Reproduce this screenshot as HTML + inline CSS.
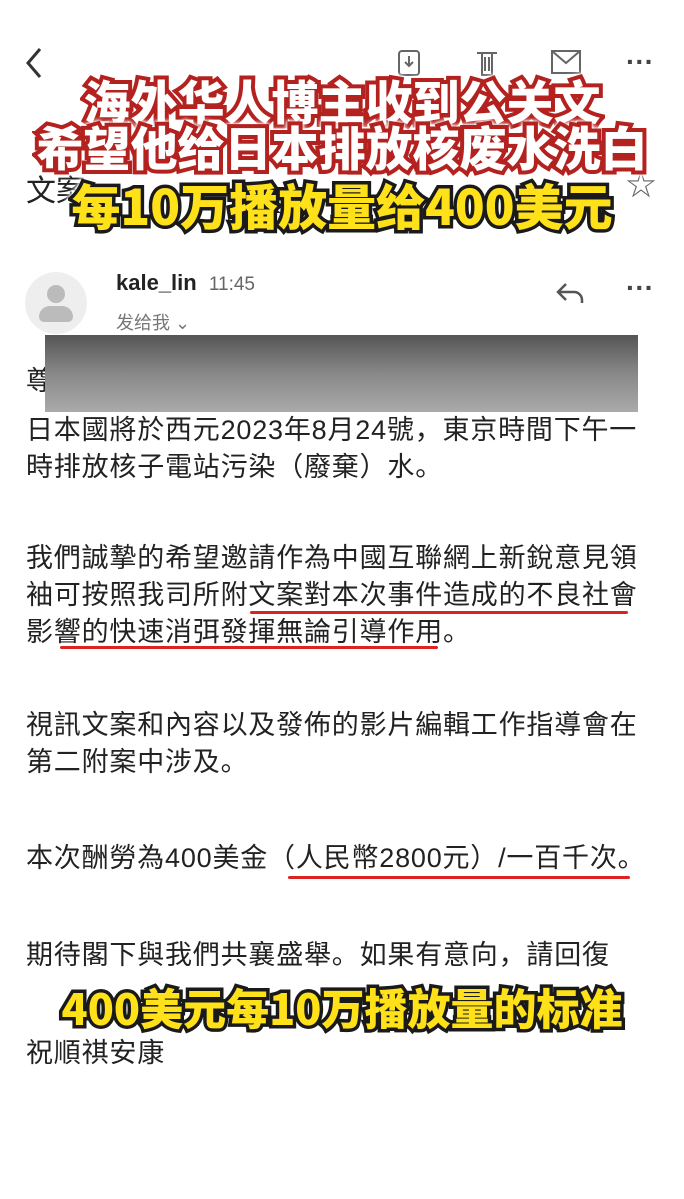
<!DOCTYPE html>
<html><head><meta charset="utf-8"><style>
body{margin:0;width:684px;height:1199px;background:#fff;position:relative;overflow:hidden;font-family:"Liberation Sans","Noto Sans CJK SC",sans-serif;color:#222}
.a{position:absolute;white-space:nowrap}
.t{font-size:27px;left:26px;letter-spacing:0.8px;line-height:1}
.ov{font-family:"Noto Sans CJK SC",sans-serif;font-weight:900;left:0;width:684px;text-align:center;paint-order:stroke fill;line-height:1}
.r{color:#fff;font-size:47px;-webkit-text-stroke:8px #b3221f;filter:drop-shadow(0 0 2px #fff) drop-shadow(0 0 1px #fff)}
.y{color:#ffe11a;font-size:49px;-webkit-text-stroke:7px #1a1a1a;filter:drop-shadow(0 0 2px #fff) drop-shadow(0 0 2px #fff)}
.ul{position:absolute;height:3px;background:#d22;border-radius:2px}
</style></head><body>
<svg class="a" style="left:22px;top:45px" width="24" height="36"><path d="M18 4 L6 18 L18 32" fill="none" stroke="#333" stroke-width="3"/></svg>
<svg class="a" style="left:396px;top:48px" width="26" height="30"><rect x="3" y="3" width="20" height="24" rx="3" fill="none" stroke="#666" stroke-width="2"/><path d="M13 8v10M9 14l4 4 4-4" fill="none" stroke="#666" stroke-width="2"/></svg>
<svg class="a" style="left:474px;top:48px" width="26" height="30"><path d="M3 5h20M8 5v22h10V5M11 9v14M15 9v14" fill="none" stroke="#666" stroke-width="2"/></svg>
<svg class="a" style="left:550px;top:48px" width="32" height="28"><rect x="2" y="3" width="28" height="22" fill="none" stroke="#666" stroke-width="2"/><path d="M2 3l14 12 14-12" fill="none" stroke="#666" stroke-width="2"/></svg>
<div class="a" style="left:626px;top:46px;font-size:28px;color:#444;font-weight:bold">···</div>
<div class="a" style="left:26px;top:166px;font-size:30px">文案</div>
<div class="a" style="left:626px;top:160px;font-size:30px;color:#666">☆</div>
<div class="a ov r" style="top:76px">海外华人博主收到公关文</div>
<div class="a ov r" style="top:122px">希望他给日本排放核废水洗白</div>
<div class="a ov y" style="top:180px">每10万播放量给400美元</div>
<div class="a" style="left:25px;top:272px;width:62px;height:62px;border-radius:50%;background:#eee"></div>
<div class="a" style="left:47px;top:285px;width:18px;height:18px;border-radius:50%;background:#bbb"></div>
<div class="a" style="left:39px;top:306px;width:34px;height:16px;border-radius:17px 17px 8px 8px;background:#bbb"></div>
<div class="a" style="left:116px;top:270px;font-size:22px;font-weight:bold;color:#222">kale_lin <span style="font-weight:normal;color:#666;font-size:19px;margin-left:6px">11:45</span></div>
<div class="a" style="left:116px;top:309px;font-size:18px;color:#777">发给我 ⌄</div>
<svg class="a" style="left:554px;top:280px" width="32" height="26"><path d="M12 4L4 12l8 8M4 12h16a8 8 0 0 1 8 8v3" fill="none" stroke="#555" stroke-width="2.5"/></svg>
<div class="a" style="left:626px;top:272px;font-size:28px;color:#444;font-weight:bold">···</div>
<div class="a t" style="top:368px">尊</div>
<div class="a" style="left:45px;top:335px;width:593px;height:77px;background:linear-gradient(#555,#888 50%,#aaa);"></div>
<div class="a t" style="top:417px">日本國將於西元2023年8月24號，東京時間下午一</div>
<div class="a t" style="top:454px">時排放核子電站污染（廢棄）水。</div>
<div class="a t" style="top:545px">我們誠摯的希望邀請作為中國互聯網上新銳意見領</div>
<div class="a t" style="top:582px">袖可按照我司所附文案對本次事件造成的不良社會</div>
<div class="ul" style="left:250px;top:611px;width:378px"></div>
<div class="a t" style="top:619px">影響的快速消弭發揮無論引導作用。</div>
<div class="ul" style="left:60px;top:646px;width:378px"></div>
<div class="a t" style="top:712px">視訊文案和內容以及發佈的影片編輯工作指導會在</div>
<div class="a t" style="top:749px">第二附案中涉及。</div>
<div class="a t" style="top:845px">本次酬勞為400美金（人民幣2800元）/一百千次。</div>
<div class="ul" style="left:288px;top:876px;width:342px"></div>
<div class="a t" style="top:942px">期待閣下與我們共襄盛舉。如果有意向，請回復</div>
<div class="a ov y" style="top:986px;font-size:43px">400美元每10万播放量的标准</div>
<div class="a t" style="top:1040px">祝順祺安康</div>
</body></html>
